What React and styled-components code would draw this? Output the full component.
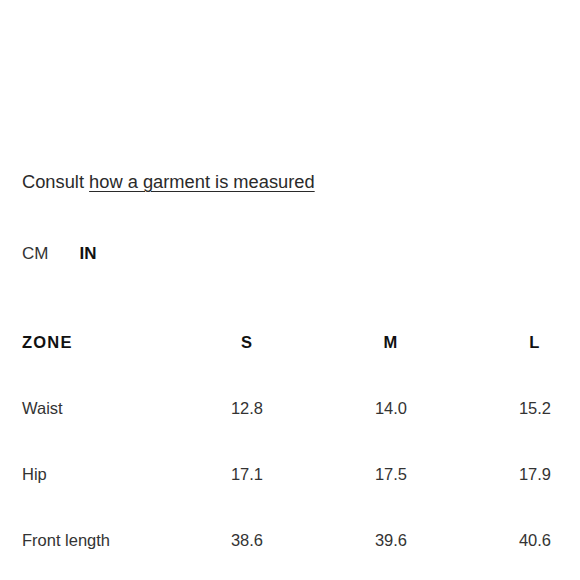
import { Fragment } from "react";
import styled, { createGlobalStyle } from "styled-components";

const GlobalStyle = createGlobalStyle`
  html, body {
    margin: 0;
    padding: 0;
    background: #fff;
  }
  body {
    font-family: "Liberation Sans", Arial, sans-serif;
    color: #2a2a2a;
  }
`;

const Page = styled.div`
  width: 580px;
  height: 580px;
  overflow: hidden;
  padding: 170px 21px 0 22px;
  box-sizing: border-box;
  display: flex;
  flex-direction: column;
`;

const Consult = styled.p`
  margin: 0;
  font-size: 18.3px;
  line-height: 24px;
  color: #2a2a2a;
`;

const GuideLink = styled.a`
  color: #2a2a2a;
  text-decoration: underline;
  text-underline-offset: 3px;
  text-decoration-thickness: 1px;
`;

const Units = styled.div`
  display: flex;
  gap: 31px;
  margin-top: 48px;
  line-height: 24px;
  font-size: 17px;
`;

const Unit = styled.span`
  font-weight: ${(p) => (p.$active ? 700 : 400)};
  color: ${(p) => (p.$active ? "#111" : "#333")};
`;

const Table = styled.div`
  margin-top: 43px;
  display: grid;
  grid-template-columns: 1fr 48px 48px 48px;
  column-gap: 96px;
  grid-auto-rows: 66px;
  align-items: center;
`;

const HeadCell = styled.div`
  font-size: 16.5px;
  font-weight: 700;
  letter-spacing: 1.2px;
  color: #111;
  text-align: ${(p) => (p.$left ? "left" : "center")};
  white-space: nowrap;
`;

const Cell = styled.div`
  font-size: 16.5px;
  color: #333;
  text-align: ${(p) => (p.$left ? "left" : "center")};
  white-space: nowrap;
`;

const sizes = ["S", "M", "L"];

const rows = [
  { zone: "Waist", values: ["12.8", "14.0", "15.2"] },
  { zone: "Hip", values: ["17.1", "17.5", "17.9"] },
  { zone: "Front length", values: ["38.6", "39.6", "40.6"] },
];

export default function App() {
  return (
    <>
      <GlobalStyle />
      <Page>
        <Consult>
          Consult <GuideLink href="#">how a garment is measured</GuideLink>
        </Consult>

        <Units>
          <Unit>CM</Unit>
          <Unit $active>IN</Unit>
        </Units>

        <Table>
          <HeadCell $left>ZONE</HeadCell>
          {sizes.map((s) => (
            <HeadCell key={s}>{s}</HeadCell>
          ))}
          {rows.map((row) => (
            <Fragment key={row.zone}>
              <Cell $left>{row.zone}</Cell>
              {row.values.map((v, i) => (
                <Cell key={i}>{v}</Cell>
              ))}
            </Fragment>
          ))}
        </Table>
      </Page>
    </>
  );
}
